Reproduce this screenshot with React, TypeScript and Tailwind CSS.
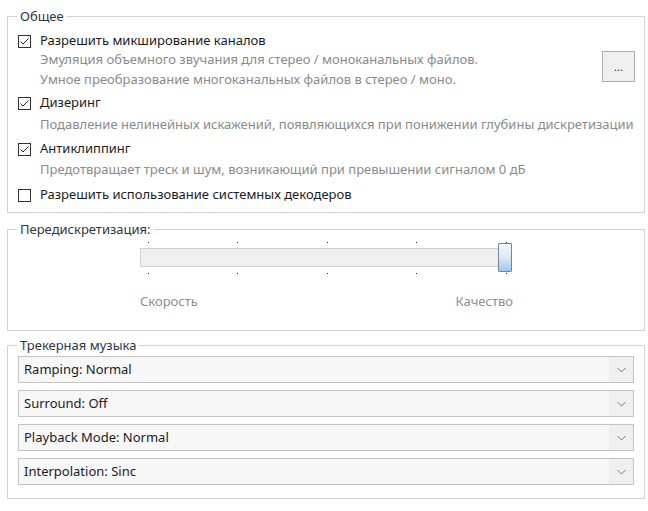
import React from "react";

function CheckBox({ checked }: { checked: boolean }) {
  return (
    <span className="flex h-[13px] w-[13px] shrink-0 items-center justify-center border border-[#333333] bg-white">
      {checked && (
        <svg width="11" height="11" viewBox="0 0 11 11">
          <path d="M1.5 5.5 L4 8 L9.5 2.5" fill="none" stroke="#222" strokeWidth="1" />
        </svg>
      )}
    </span>
  );
}

function CheckRow({ label, checked, className }: { label: string; checked: boolean; className?: string }) {
  return (
    <div className={"flex h-[20px] items-center pl-[10px] " + (className ?? "")}>
      <CheckBox checked={checked} />
      <span className="ml-[9px] text-[#1b1b1b]">{label}</span>
    </div>
  );
}

function Desc({ children }: { children: React.ReactNode }) {
  return <div className="flex h-[20px] items-center whitespace-nowrap pl-[32px] text-[#8a8a8a]">{children}</div>;
}

function Group({ title, className, children }: { title: string; className?: string; children: React.ReactNode }) {
  return (
    <fieldset className={"border border-[#d3d3d3] " + (className ?? "")}>
      <legend className="ml-[9px] px-[3px] leading-[16px] text-[#2a3646]">{title}</legend>
      {children}
    </fieldset>
  );
}

function Combo({ label }: { label: string }) {
  return (
    <div className="flex h-[27px] items-stretch border border-[#c4c4c4] bg-[#f7f7f7]">
      <div className="flex flex-1 items-center px-[5px] text-[#1b1b1b]">{label}</div>
      <div className="flex w-[24px] items-center justify-center bg-[#efefef]">
        <svg width="9" height="6" viewBox="0 0 9 6">
          <path d="M0.5 1 L4.5 5 L8.5 1" fill="none" stroke="#7a7a7a" strokeWidth="1" />
        </svg>
      </div>
    </div>
  );
}

const ticks = [8, 97, 187, 276, 366];

export default function App() {
  return (
    <div
      className="h-[511px] w-[648px] bg-white pl-[7px] pr-[3px] pt-[8px] text-[13px]"
      style={{ fontFamily: '"Noto Sans", "Open Sans", sans-serif' }}
    >
      <Group title="Общее">
        <div className="pb-[7px] pt-[7px]">
          <CheckRow label="Разрешить микширование каналов" checked />
          <div className="-mt-px flex items-start">
            <div className="flex-1">
              <Desc>Эмуляция объемного звучания для стерео / моноканальных файлов.</Desc>
              <Desc>Умное преобразование многоканальных файлов в стерео / моно.</Desc>
            </div>
            <button className="mr-[9px] mt-[1px] flex h-[31px] w-[33px] items-center justify-center border border-[#adadad] bg-[#efefef] text-[11px] leading-none text-[#333]">
              ...
            </button>
          </div>
          <CheckRow label="Дизеринг" checked className="mt-[3px]" />
          <div className="mt-[2px]">
            <Desc>Подавление нелинейных искажений, появляющихся при понижении глубины дискретизации</Desc>
          </div>
          <CheckRow label="Антиклиппинг" checked className="mt-[4px]" />
          <div className="mt-[1px]">
            <Desc>Предотвращает треск и шум, возникающий при превышении сигналом 0 дБ</Desc>
          </div>
          <CheckRow label="Разрешить использование системных декодеров" checked={false} className="mt-[5px]" />
        </div>
      </Group>

      <Group title="Передискретизация:" className="mt-[8px]">
        <div className="pb-[18px] pl-[132px] pt-[4px]">
          <div className="relative h-[34px] w-[373px]">
            {ticks.map((x) => (
              <React.Fragment key={x}>
                <span className="absolute top-[1px] h-px w-px bg-[#222]" style={{ left: x }} />
                <span className="absolute top-[32px] h-px w-px bg-[#222]" style={{ left: x }} />
              </React.Fragment>
            ))}
            <div className="absolute left-0 top-[7px] h-[19px] w-[370px] border border-[#cfcfcf] bg-[#efefef]" />
            <div className="absolute left-[358px] top-[2px] h-[29px] w-[14px] rounded-[1px] border border-[#6f8798] bg-gradient-to-b from-[#f2f7fc] via-[#dbe9f7] to-[#9fc6ee]" />
          </div>
          <div className="mt-[17px] flex h-[20px] w-[373px] items-center justify-between text-[#8e8e8e]">
            <span>Скорость</span>
            <span>Качество</span>
          </div>
        </div>
      </Group>

      <Group title="Трекерная музыка" className="mt-[6px]">
        <div className="flex flex-col gap-[7px] pb-[13px] pl-[10px] pr-[10px] pt-[3px]">
          <Combo label="Ramping: Normal" />
          <Combo label="Surround: Off" />
          <Combo label="Playback Mode: Normal" />
          <Combo label="Interpolation: Sinc" />
        </div>
      </Group>
    </div>
  );
}
